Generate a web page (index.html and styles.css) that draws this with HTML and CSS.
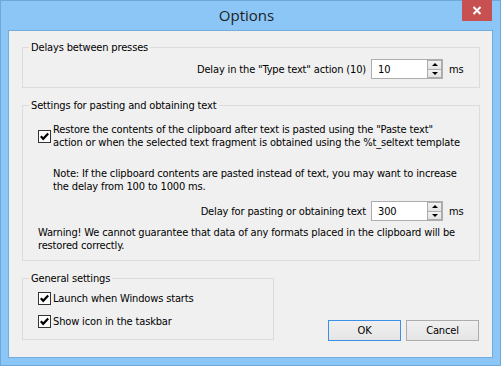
FILE: index.html
```html
<!DOCTYPE html>
<html>
<head>
<meta charset="utf-8">
<title>Options</title>
<link rel="stylesheet" href="styles.css">
</head>
<body>
<div class="window">
  <div class="titlebar">
    <span class="tb-spacer"></span>
    <div class="title">Options</div>
    <button class="close" aria-label="Close"><svg width="10" height="9" viewBox="0 0 10 9"><path d="M1.5 1 L8.5 8 M8.5 1 L1.5 8" stroke="#fff" stroke-width="2"/></svg></button>
  </div>
  <div class="client">
    <fieldset class="group g1">
      <legend>Delays between presses</legend>
      <div class="delay-row r1">
        <span class="lbl">Delay in the "Type text" action (10)</span>
        <div class="spin"><span class="val">10</span><div class="spin-btns"><div class="sb up"></div><div class="sb down"></div></div></div>
        <span class="unit">ms</span>
      </div>
    </fieldset>

    <fieldset class="group g2">
      <legend>Settings for pasting and obtaining text</legend>
      <div class="cb-row first">
        <svg class="cb" width="13" height="13" viewBox="0 0 13 13"><rect x="0.5" y="0.5" width="12" height="12" fill="#fff" stroke="#333"/><path d="M2.8 6.3 L5.2 8.8 L10.2 3.4" fill="none" stroke="#000" stroke-width="2.2"/></svg>
        <span class="cb-text">Restore the contents of the clipboard after text is pasted using the "Paste text"<br>action or when the selected text fragment is obtained using the %t_seltext template</span>
      </div>
      <p class="note">Note: If the clipboard contents are pasted instead of text, you may want to increase<br>the delay from 100 to 1000 ms.</p>
      <div class="delay-row r2">
        <span class="lbl">Delay for pasting or obtaining text</span>
        <div class="spin"><span class="val">300</span><div class="spin-btns"><div class="sb up"></div><div class="sb down"></div></div></div>
        <span class="unit">ms</span>
      </div>
      <p class="warning">Warning! We cannot guarantee that data of any formats placed in the clipboard will be<br>restored correctly.</p>
    </fieldset>

    <div class="bottom">
      <fieldset class="group g3">
        <legend>General settings</legend>
        <div class="cb-row gen first">
          <svg class="cb" width="13" height="13" viewBox="0 0 13 13"><rect x="0.5" y="0.5" width="12" height="12" fill="#fff" stroke="#333"/><path d="M2.8 6.3 L5.2 8.8 L10.2 3.4" fill="none" stroke="#000" stroke-width="2.2"/></svg>
          <span class="cb-text">Launch when Windows starts</span>
        </div>
        <div class="cb-row gen second">
          <svg class="cb" width="13" height="13" viewBox="0 0 13 13"><rect x="0.5" y="0.5" width="12" height="12" fill="#fff" stroke="#333"/><path d="M2.8 6.3 L5.2 8.8 L10.2 3.4" fill="none" stroke="#000" stroke-width="2.2"/></svg>
          <span class="cb-text">Show icon in the taskbar</span>
        </div>
      </fieldset>
      <div class="buttons">
        <button class="btn default">OK</button>
        <button class="btn">Cancel</button>
      </div>
    </div>
  </div>
</div>
</body>
</html>
```
FILE: styles.css
```css
* { box-sizing: border-box; }
html, body { margin: 0; padding: 0; }
body {
  font-family: "DejaVu Sans Condensed", "DejaVu Sans", sans-serif;
  font-size: 11px;
  line-height: 13px;
  letter-spacing: -0.15px;
  color: #000;
}
.window {
  width: 501px;
  height: 366px;
  background: #8bc6f6;
  border: 1px solid #6ea8d9;
  display: flex;
  flex-direction: column;
}
.titlebar {
  height: 29px;
  display: grid;
  grid-template-columns: 1fr auto 1fr;
  align-items: start;
  padding-right: 8px;
}
.title {
  font-family: "Open Sans", "Noto Sans", sans-serif;
  font-size: 15px;
  line-height: 29px;
  letter-spacing: 0;
  color: #1e1e1e;
}
.close {
  justify-self: end;
  width: 30px;
  height: 21px;
  margin-top: -1px;
  padding: 0;
  border: 0;
  background: #c75050;
  display: flex;
  align-items: center;
  justify-content: center;
}
.client {
  flex: 1;
  margin: 0 7px 7px;
  background: #f0f0f0;
  border: 1px solid #74acdc;
  padding: 0 12px 0 13px;
}
.group {
  margin: 0;
  padding: 0;
  border: 1px solid #dcdcdc;
  min-width: 0;
}
.group legend {
  margin-left: 6px;
  padding: 0 2px;
  line-height: 13px;
}
.g1 { margin-top: 10px; }
.g2 { margin-top: 11px; }
.delay-row {
  display: flex;
  justify-content: flex-end;
  align-items: center;
}
.r1 { margin-top: 5px; margin-bottom: 8px; }
.r2 { margin-top: 8px; }
.lbl { margin-right: 5px; }
.unit { margin-left: 6px; width: 30px; }
.spin {
  width: 72px;
  height: 20px;
  background: #fff;
  border: 1px solid #abadb3;
  display: flex;
  align-items: center;
  justify-content: space-between;
}
.val { padding-left: 6px; }
.spin-btns {
  width: 15px;
  height: 18px;
  display: flex;
  flex-direction: column;
}
.sb {
  flex: 1;
  border: 1px solid #acacac;
  background: linear-gradient(#f2f2f2, #e3e3e3);
  display: flex;
  align-items: center;
  justify-content: center;
}
.sb.down { border-top: 0; }
.sb::after {
  content: "";
  width: 0;
  height: 0;
  border-left: 3px solid transparent;
  border-right: 3px solid transparent;
}
.sb.up::after { border-bottom: 3px solid #000; }
.sb.down::after { border-top: 3px solid #000; }
.cb-row {
  display: flex;
  align-items: center;
  margin-left: 15px;
}
.cb { flex: none; margin-right: 2px; }
.g2 .cb-row.first { margin-top: 11px; }
.note {
  margin: 18px 0 0 30px;
}
.warning {
  margin: 5px 0 8px 15px;
}
.bottom {
  display: flex;
  align-items: flex-end;
}
.g3 {
  margin-top: 11px;
  width: 252px;
  flex: none;
}
.cb-row.gen.first { margin-top: 7px; }
.cb-row.gen.second { margin-top: 10px; margin-bottom: 11px; }
.buttons {
  margin-left: auto;
  margin-right: 1px;
  margin-bottom: -1px;
  display: flex;
  gap: 5px;
}
.btn {
  width: 73px;
  height: 21px;
  padding: 0;
  font-family: inherit;
  font-size: 11px;
  letter-spacing: inherit;
  color: #000;
  border: 1px solid #acacac;
  background: linear-gradient(#f0f0f0, #e5e5e5);
}
.btn.default { border-color: #3c8fe6; }
```
